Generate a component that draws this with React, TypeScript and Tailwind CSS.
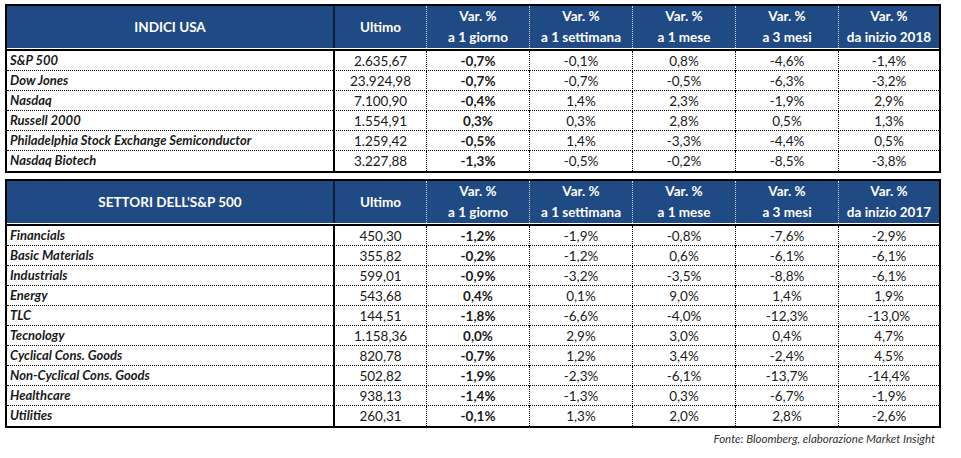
import React from 'react';

type Row = [string, string, string, string, string, string, string];

const indici: Row[] = [
  ['S&P 500', '2.635,67', '-0,7%', '-0,1%', '0,8%', '-4,6%', '-1,4%'],
  ['Dow Jones', '23.924,98', '-0,7%', '-0,7%', '-0,5%', '-6,3%', '-3,2%'],
  ['Nasdaq', '7.100,90', '-0,4%', '1,4%', '2,3%', '-1,9%', '2,9%'],
  ['Russell 2000', '1.554,91', '0,3%', '0,3%', '2,8%', '0,5%', '1,3%'],
  ['Philadelphia Stock Exchange Semiconductor', '1.259,42', '-0,5%', '1,4%', '-3,3%', '-4,4%', '0,5%'],
  ['Nasdaq Biotech', '3.227,88', '-1,3%', '-0,5%', '-0,2%', '-8,5%', '-3,8%'],
];

const settori: Row[] = [
  ['Financials', '450,30', '-1,2%', '-1,9%', '-0,8%', '-7,6%', '-2,9%'],
  ['Basic Materials', '355,82', '-0,2%', '-1,2%', '0,6%', '-6,1%', '-6,1%'],
  ['Industrials', '599,01', '-0,9%', '-3,2%', '-3,5%', '-8,8%', '-6,1%'],
  ['Energy', '543,68', '0,4%', '0,1%', '9,0%', '1,4%', '1,9%'],
  ['TLC', '144,51', '-1,8%', '-6,6%', '-4,0%', '-12,3%', '-13,0%'],
  ['Tecnology', '1.158,36', '0,0%', '2,9%', '3,0%', '0,4%', '4,7%'],
  ['Cyclical Cons. Goods', '820,78', '-0,7%', '1,2%', '3,4%', '-2,4%', '4,5%'],
  ['Non-Cyclical Cons. Goods', '502,82', '-1,9%', '-2,3%', '-6,1%', '-13,7%', '-14,4%'],
  ['Healthcare', '938,13', '-1,4%', '-1,3%', '0,3%', '-6,7%', '-1,9%'],
  ['Utilities', '260,31', '-0,1%', '1,3%', '2,0%', '2,8%', '-2,6%'],
];

const cols = 'grid grid-cols-[328px_92px_103px_103px_103px_103px_100px]';

const VarHead = ({ label, last }: { label: string; last?: boolean }) => (
  <div
    className={`flex flex-col items-center justify-center leading-[21px] ${
      last ? '' : 'border-r border-dotted border-[#c9d3e3]'
    }`}
  >
    <span>Var. %</span>
    <span>{label}</span>
  </div>
);

const DataTable = ({ title, rows, year }: { title: string; rows: Row[]; year: string }) => (
  <div className="w-[936px] border-2 border-black">
    {/* Intestazione */}
    <div className={`${cols} h-[42px] bg-[#1f4a84] text-white font-bold text-[13.5px]`}>
      <div className="flex items-center justify-center border-r-2 border-[#0f1f38]">{title}</div>
      <div className="flex items-center justify-center border-r border-dotted border-[#c9d3e3]">Ultimo</div>
      <VarHead label="a 1 giorno" />
      <VarHead label="a 1 settimana" />
      <VarHead label="a 1 mese" />
      <VarHead label="a 3 mesi" />
      <VarHead label={`da inizio ${year}`} last />
    </div>
    <div className="h-px bg-white" />
    <div className="h-[2px] bg-black" />
    {rows.map((r, i) => (
      <div
        key={r[0]}
        className={`${cols} h-[20px] text-[13.5px] text-[#1a1a1a] ${
          i < rows.length - 1 ? 'border-b border-dotted border-black' : ''
        }`}
      >
        <div className="flex items-center pl-[3px] text-[13px] font-bold italic border-r-2 border-black">{r[0]}</div>
        <div className="flex items-center justify-center border-r border-dotted border-black">{r[1]}</div>
        <div className="flex items-center justify-center font-bold border-r border-dotted border-black">{r[2]}</div>
        <div className="flex items-center justify-center border-r border-dotted border-black">{r[3]}</div>
        <div className="flex items-center justify-center border-r border-dotted border-black">{r[4]}</div>
        <div className="flex items-center justify-center border-r border-dotted border-black">{r[5]}</div>
        <div className="flex items-center justify-center">{r[6]}</div>
      </div>
    ))}
  </div>
);

export default function App() {
  return (
    <div className="w-[961px] h-[458px] bg-white pl-[5px] pt-[4px] font-['Lato',sans-serif]">
      <DataTable title="INDICI USA" rows={indici} year="2018" />
      <div className="h-[6px]" />
      <DataTable title="SETTORI DELL'S&P 500" rows={settori} year="2017" />
      <div className="w-[930px] text-right italic text-[11.5px] text-[#333] mt-[2px]">
        Fonte: Bloomberg, elaborazione Market Insight
      </div>
    </div>
  );
}
